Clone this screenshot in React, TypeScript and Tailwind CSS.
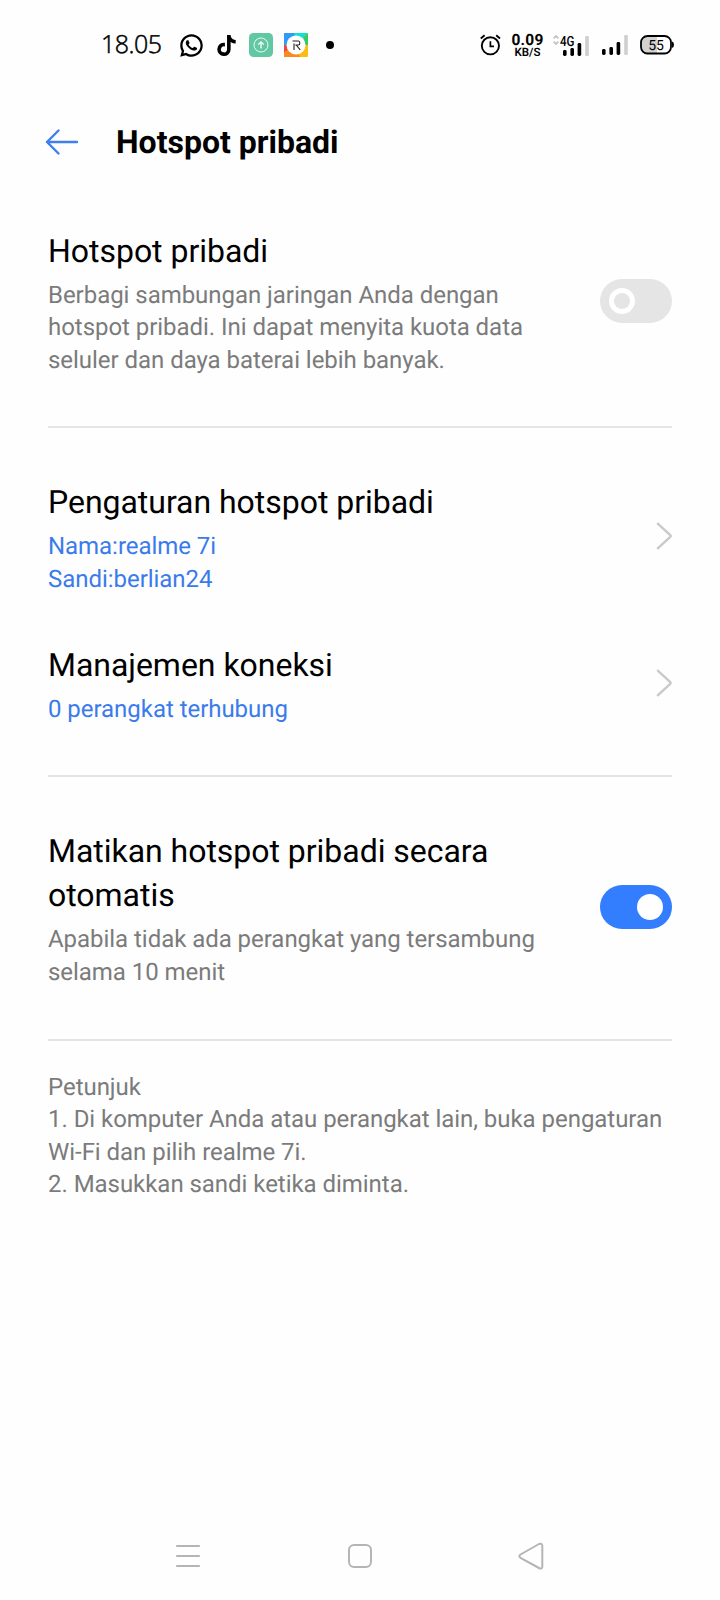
import type { ReactNode } from "react";
import { FaTiktok } from "react-icons/fa6";
import { RiWhatsappLine } from "react-icons/ri";

function SignalBars({ className = "" }: { className?: string }) {
  return (
    <svg className={className} width="28" height="22" viewBox="0 0 28 22">
      <rect x="1" y="14" width="3.6" height="6" rx="1.4" />
      <rect x="8.4" y="12" width="3.6" height="8" rx="1.4" />
      <rect x="15.6" y="7" width="3.6" height="13" rx="1.4" />
      <rect x="23.2" y="0" width="3.6" height="20" rx="1.2" fill="#cfcfcf" />
    </svg>
  );
}

function StatusBar() {
  return (
    <div className="flex h-[90px] items-center pl-[101px] pr-[45px] text-black">
      <span className="w-[79px] pb-0.5 font-['Open_Sans',sans-serif] text-[25px] leading-[30px] font-light tracking-[-0.5px] [-webkit-text-stroke:0.5px_black]">
        18.05
      </span>
      <RiWhatsappLine className="-ml-[2px] mr-[10px] size-[27px] shrink-0" />
      <FaTiktok className="mr-3 ml-px size-[21px] shrink-0" />
      <svg className="mr-[11px] shrink-0" width="24" height="24" viewBox="0 0 24 24">
        <rect width="24" height="24" rx="4.5" fill="#62c7a3" />
        <circle cx="12" cy="12" r="7" fill="none" stroke="#e4fff5" strokeWidth="1" />
        <path d="M12 15.5V9M9.2 11.6 12 8.8l2.8 2.8" fill="none" stroke="#fff" strokeWidth="1.3" />
      </svg>
      <svg className="shrink-0" width="24" height="24" viewBox="0 0 24 24">
        <rect width="24" height="24" rx="1" fill="#fbbd12" />
        <path d="M0 0h11l1 12L0 13z" fill="#2e9bf5" />
        <path d="M10 0h14L12 12z" fill="#12e0d0" />
        <path d="M24 0v12H12z" fill="#35c96b" />
        <path d="M0 12h12L2 20H0z" fill="#f2453d" />
        <path d="M0 19 12 12l4 12H0z" fill="#fb8a1e" />
        <circle cx="12" cy="12" r="9.5" fill="#fff" />
        <path d="M8.500 8h6q1.300 0 1.300 2t-1.300 2h-3.200M10 10.500V17M12.200 12l4 4.800" fill="none" stroke="#222" strokeWidth="1.1" />
      </svg>
      <span className="ml-[18px] size-2 rounded-full bg-black" />

      <div className="ml-auto flex items-center">
        <svg className="mr-[10px]" width="22" height="24" viewBox="0 0 22 24" fill="none" stroke="#000">
          <circle cx="11.400" cy="12.800" r="8.600" strokeWidth="1.900" />
          <path d="M11.400 8.300v5H15" strokeWidth="1.700" />
          <path d="M1.800 5.400 5.600 2.200M21 5.400 17.200 2.200" strokeWidth="1.900" />
        </svg>
        <div className="mr-[9px] flex w-[33px] flex-col items-center pt-px font-['Roboto',sans-serif]">
          <span className="text-[15.500px] leading-[13px] font-bold tracking-[0.200px]">0.09</span>
          <span className="text-[11.500px] leading-[11px] font-semibold">KB/S</span>
        </div>
        <div className="relative h-[22px] w-[38px]">
          <svg className="absolute left-0 top-px" width="6" height="10" viewBox="0 0 6 10" fill="none" stroke="#c4c4c4" strokeWidth="1.800">
            <path d="m.6 3.400 2.400-2.400 2.400 2.400M.6 6.600 3 9l2.400-2.400" />
          </svg>
          <SignalBars className="absolute left-[9px] top-0.5" />
          <svg className="absolute -top-1 left-[6px]" width="20" height="22" viewBox="0 0 20 22">
            <text x="1" y="16" textLength="14.500" lengthAdjust="spacingAndGlyphs" fontFamily="Roboto, sans-serif" fontSize="14" fontWeight="500">4G</text>
          </svg>
        </div>
        <SignalBars className="relative top-px ml-[10px]" />
        <svg className="ml-[11px]" width="35" height="20" viewBox="0 0 35 20">
          <rect x="1" y="1" width="30" height="17.500" rx="6.500" fill="#fff" />
          <path d="M17 1H7.500A6.500 6.500 0 0 0 1 7.500v4.500a6.500 6.500 0 0 0 6.500 6.500H17z" fill="#d2d2d2" />
          <rect x="1" y="1" width="30" height="17.500" rx="6.500" fill="none" stroke="#000" strokeWidth="1.800" />
          <path d="M32 6.500q2 .5 2 3.200t-2 3.200z" />
          <text x="16" y="14.600" textAnchor="middle" fontFamily="Roboto, sans-serif" fontSize="14">55</text>
        </svg>
      </div>
    </div>
  );
}

function Toggle({ on }: { on: boolean }) {
  return (
    <button
      role="switch"
      aria-checked={on}
      className={
        "mb-1 flex h-11 w-[72px] shrink-0 items-center rounded-full px-[9px] " +
        (on ? "justify-end bg-[#337dff]" : "justify-start bg-[#e5e5e5]")
      }
    >
      <span className={"size-[26px] rounded-full " + (on ? "bg-white" : "border-[5px] border-white")} />
    </button>
  );
}

function Chevron() {
  return (
    <svg className="mb-[3px] shrink-0" width="16" height="28" viewBox="0 0 16 28" fill="none" stroke="#c9c9c9" strokeWidth="2.400" strokeLinejoin="round">
      <path d="M1.200 1.200 14 12.800q1.200 1.200 0 2.400L1.200 26.800" />
    </svg>
  );
}

function Row({ className, title, control, link, children }: {
  className: string;
  title: string;
  control: ReactNode;
  link?: boolean;
  children: ReactNode;
}) {
  return (
    <div className={"flex items-center justify-between " + className}>
      <div className="w-[500px]">
        <h2 className="text-[32px] leading-[44px] tracking-[-0.030px] text-black">{title}</h2>
        <p className={"mt-[6px] text-[24px] leading-[32.500px] tracking-[-0.040px] " + (link ? "text-[#3a7bec]" : "text-[#7b7b7b]")}>
          {children}
        </p>
      </div>
      {control}
    </div>
  );
}

function Divider() {
  return <div className="h-0.5 bg-[#e5e5e5]" />;
}

export default function App() {
  return (
    <div className="flex h-[1600px] w-[720px] flex-col bg-[#fefefe] font-['Roboto',sans-serif] [text-rendering:geometricPrecision]">
      <StatusBar />
      <header className="flex h-[104px] items-center pl-[45px]">
        <svg width="34" height="26" viewBox="0 0 34 26" fill="none" stroke="#3f7fef" strokeWidth="2.400" strokeLinecap="round" strokeLinejoin="round">
          <path d="M32 13H2M13.500 1.500 2 13l11.500 11.500" />
        </svg>
        <h1 className="ml-[37px] text-[32px] leading-[44px] font-bold text-black">Hotspot pribadi</h1>
      </header>

      <main className="flex-1 px-12">
        <Row className="h-[232px] pb-[15px]" title="Hotspot pribadi" control={<Toggle on={false} />}>
          Berbagi sambungan jaringan Anda dengan hotspot pribadi. Ini dapat menyita kuota data seluler dan daya baterai lebih banyak.
        </Row>
        <Divider />
        <Row className="mt-[52px] h-[115px]" title="Pengaturan hotspot pribadi" link control={<Chevron />}>
          Nama:realme 7i
          <br />
          Sandi:berlian24
        </Row>
        <Row className="mt-[48px] h-[83px]" title="Manajemen koneksi" link control={<Chevron />}>
          0 perangkat terhubung
        </Row>
        <div className="h-[49px]" />
        <Divider />
        <Row className="mt-[52px] h-[159px]" title="Matikan hotspot pribadi secara otomatis" control={<Toggle on />}>
          Apabila tidak ada perangkat yang tersambung selama 10 menit
        </Row>
        <div className="h-[51px]" />
        <Divider />
        <div className="mt-[30px] text-[24px] leading-[32.300px] tracking-[-0.040px] text-[#7b7b7b]">
          <p>Petunjuk</p>
          <p>1. Di komputer Anda atau perangkat lain, buka pengaturan Wi-Fi dan pilih realme 7i.</p>
          <p>2. Masukkan sandi ketika diminta.</p>
        </div>
      </main>

      <nav className="flex h-[88px] items-center pl-[175px]">
        <svg width="26" height="26" viewBox="0 0 26 26" stroke="#b5b5b5" strokeWidth="2.200" strokeLinecap="round">
          <path d="M2 3h22M2 13h22M2 23h22" />
        </svg>
        <svg className="ml-[146px]" width="26" height="26" viewBox="0 0 26 26" fill="none" stroke="#b5b5b5" strokeWidth="2">
          <rect x="2" y="2" width="22" height="22" rx="5" />
        </svg>
        <svg className="ml-[144px]" width="28" height="28" viewBox="0 0 28 28" fill="none" stroke="#b5b5b5" strokeWidth="2" strokeLinejoin="round">
          <path d="M3.500 12.500 22 2Q25 1 25.300 3.500V25Q25 27.500 22 26L3.500 15.800Q1.200 14.200 3.500 12.500Z" />
        </svg>
      </nav>
    </div>
  );
}
